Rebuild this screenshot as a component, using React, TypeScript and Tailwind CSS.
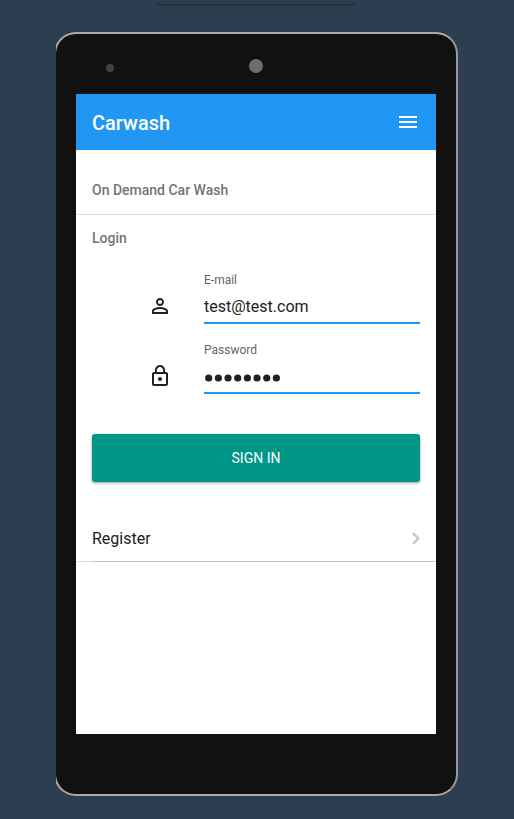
import { MdLockOutline, MdPersonOutline } from 'react-icons/md';
import type { ReactNode } from 'react';

function Field({ icon, label, children }: { icon: ReactNode; label: string; children: ReactNode }) {
  return (
    <label className="flex h-[70px] pr-4 pl-[72px]">
      <span className="w-14 pt-[26px] text-[#212121]">{icon}</span>
      <span className="flex flex-1 flex-col pt-1">
        <span className="h-4 text-[12px] leading-4 text-[#65656a]">{label}</span>
        <span className="flex h-9 w-full items-center border-b-2 border-[#2196f3] pt-1 text-[16px] text-[#212121]">
          {children}
        </span>
      </span>
    </label>
  );
}

export default function App() {
  return (
    <div className="h-[819px] w-[514px] overflow-hidden bg-[#2c3e50] font-[Roboto,sans-serif]">
      <div className="mx-auto h-1 w-[200px] -translate-x-px rounded-b-[4px] bg-[#2c3e50] shadow-[0_1px_2px_rgba(0,0,0,0.35)]" />
      <div className="mt-7 ml-14 w-[402px] overflow-hidden">
        <div className="-ml-0.5 h-[764px] w-[404px] rounded-[22px] border-2 border-[#aaaaa8] border-r-[#96989a] bg-[#111] pl-5">
          <div className="flex h-[60px] items-start">
            <span className="mt-[30px] ml-[30px] size-2 rounded-full bg-[#3d4450]" />
            <span className="mt-[25px] ml-[135px] size-[14px] rounded-full bg-[#6c6c77]" />
          </div>
          <div className="h-[640px] w-[360px] bg-white">
            <header className="flex h-14 items-center justify-between bg-[#2196f3] pr-[19px] pl-4 text-white">
              <h1 className="pt-0.5 text-[20px] font-medium">Carwash</h1>
              <button className="flex flex-col gap-[3px]" aria-label="Menu">
                <span className="h-0.5 w-[18px] bg-white" />
                <span className="h-0.5 w-[18px] bg-white" />
                <span className="h-0.5 w-[18px] bg-white" />
              </button>
            </header>
            <div className="h-[65px] border-b border-[#dedede] pt-[30px] pl-4 text-[14px] leading-5 font-medium text-[#757575]">
              On Demand Car Wash
            </div>
            <div className="h-[53px] pt-[13px] pl-4 text-[14px] leading-5 font-medium text-[#757575]">Login</div>
            <Field icon={<MdPersonOutline size={24} />} label="E-mail">
              <input type="text" defaultValue="test@test.com" className="w-full bg-transparent outline-none" />
            </Field>
            <Field icon={<MdLockOutline size={24} />} label="Password">
              <svg width="80" height="10" viewBox="0 0 80 10" className="mt-px" fill="#212121">
                {Array.from({ length: 8 }, (_, i) => (
                  <circle key={i} cx={4.7 + i * 9.67} cy={5} r={3.6} />
                ))}
              </svg>
            </Field>
            <div className="px-4 pt-[26px]">
              <button className="h-12 w-full rounded-[3px] bg-[#009688] text-[14px] text-white shadow-[0_1px_3px_rgba(0,0,0,0.4)]">
                SIGN IN
              </button>
            </div>
            <div className="mt-[33px] flex h-[46px] items-center justify-between pt-px pr-4 pl-4 text-[16px] text-[#212121]">
              <span className="pt-px">Register</span>
              <svg width="8" height="13" viewBox="0 0 8 13" fill="none" stroke="#c4c4c8" strokeWidth="2.3">
                <path d="M1 1.1 6.3 6.5 1 11.9" />
              </svg>
            </div>
            <div className="h-px bg-[#dedede] pl-4">
              <div className="h-px bg-[#c4c4c4]" />
            </div>
          </div>
        </div>
      </div>
    </div>
  );
}
